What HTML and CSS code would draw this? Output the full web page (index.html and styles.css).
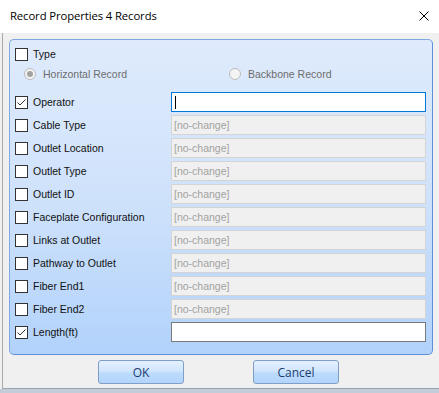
FILE: index.html
```html
<!DOCTYPE html>
<html>
<head>
<meta charset="utf-8">
<link rel="stylesheet" href="styles.css">
</head>
<body>
<div class="window">
  <div class="titlebar">
    <span class="title">Record Properties 4 Records</span>
    <svg class="close" width="10" height="10" viewBox="0 0 10 10"><path d="M0.5 0.5 L9.5 9.5 M9.5 0.5 L0.5 9.5" stroke="#000" stroke-width="1" fill="none"/></svg>
  </div>
  <div class="client">
    <div class="panel">
      <div class="row type-row">
        <span class="cb"></span><span class="label">Type</span>
      </div>
      <div class="radio-row">
        <div class="radio-item r1"><span class="radio on"></span><span class="rlabel">Horizontal Record</span></div>
        <div class="radio-item r2"><span class="radio"></span><span class="rlabel">Backbone Record</span></div>
      </div>
      <div class="rows">
        <div class="row"><span class="cb checked"><svg width="11" height="11" viewBox="0 0 11 11"><path d="M1.5 5.5 L4 8 L9.5 2.5" stroke="#333" stroke-width="1" fill="none"/></svg></span><span class="label">Operator</span><div class="field focus"><span class="caret"></span></div></div>
        <div class="row"><span class="cb"></span><span class="label">Cable Type</span><div class="field dis">[no-change]</div></div>
        <div class="row"><span class="cb"></span><span class="label">Outlet Location</span><div class="field dis">[no-change]</div></div>
        <div class="row"><span class="cb"></span><span class="label">Outlet Type</span><div class="field dis">[no-change]</div></div>
        <div class="row"><span class="cb"></span><span class="label">Outlet ID</span><div class="field dis">[no-change]</div></div>
        <div class="row"><span class="cb"></span><span class="label">Faceplate Configuration</span><div class="field dis">[no-change]</div></div>
        <div class="row"><span class="cb"></span><span class="label">Links at Outlet</span><div class="field dis">[no-change]</div></div>
        <div class="row"><span class="cb"></span><span class="label">Pathway to Outlet</span><div class="field dis">[no-change]</div></div>
        <div class="row"><span class="cb"></span><span class="label">Fiber End1</span><div class="field dis">[no-change]</div></div>
        <div class="row"><span class="cb"></span><span class="label">Fiber End2</span><div class="field dis">[no-change]</div></div>
        <div class="row"><span class="cb checked"><svg width="11" height="11" viewBox="0 0 11 11"><path d="M1.5 5.5 L4 8 L9.5 2.5" stroke="#333" stroke-width="1" fill="none"/></svg></span><span class="label">Length(ft)</span><div class="field normal"></div></div>
      </div>
    </div>
    <div class="buttons">
      <button class="btn ok">OK</button>
      <button class="btn cancel">Cancel</button>
    </div>
  </div>
</div>
</body>
</html>
```
FILE: styles.css
```css
html, body {
  margin: 0;
  padding: 0;
}
body {
  width: 439px;
  height: 393px;
  overflow: hidden;
  background: #c3cdd9;
  font-family: "Liberation Sans", Arial, sans-serif;
}
.window {
  width: 439px;
  height: 389px;
  background: #f0f0f0;
  display: flex;
  flex-direction: column;
}
.titlebar {
  height: 33px;
  background: #ffffff;
  display: flex;
  align-items: center;
  padding-left: 10px;
  padding-right: 10px;
  box-sizing: border-box;
  flex: none;
}
.title {
  font-family: "Open Sans", "Noto Sans", sans-serif;
  font-size: 11.3px;
  color: #000;
  flex: 1;
  letter-spacing: -0.1px;
  margin-top: -2px;
}
.close {
  margin-top: -1px;
}
.client {
  flex: 1;
  margin-left: 2px;
  border-left: 1px solid #a8a8a8;
  border-bottom: 1px solid #9aa4b0;
  display: flex;
  flex-direction: column;
  padding-top: 6px;
  padding-left: 6px;
}
.panel {
  width: 424px;
  height: 316px;
  box-sizing: border-box;
  border: 1px solid #7fa7e0;
  border-right-color: #5e90d8;
  border-bottom-color: #5e90d8;
  border-radius: 5px;
  background: linear-gradient(to bottom, #dfebfc 0%, #cfe2fb 50%, #b2d2fb 100%);
  padding: 4px 0 0 5px;
}
.row {
  display: flex;
  align-items: center;
  height: 20px;
}
.cb {
  width: 13px;
  height: 13px;
  box-sizing: border-box;
  border: 1px solid #333;
  background: #fff;
  flex: none;
  display: flex;
  align-items: center;
  justify-content: center;
}
.label {
  font-size: 10.5px;
  color: #111;
  margin-left: 5px;
  width: 138px;
  white-space: nowrap;
}
.radio-row {
  display: flex;
  height: 20px;
  align-items: center;
}
.radio-item {
  display: flex;
  align-items: center;
}
.r1 {
  margin-left: 9px;
  width: 205px;
}
.radio {
  width: 12px;
  height: 12px;
  box-sizing: border-box;
  border-radius: 50%;
  border: 1px solid #bcbcbc;
  background: #f4f4f4;
  position: relative;
  flex: none;
}
.radio.on::after {
  content: "";
  position: absolute;
  left: 2px;
  top: 2px;
  width: 6px;
  height: 6px;
  border-radius: 50%;
  background: #a3a3a3;
}
.rlabel {
  font-size: 10.5px;
  color: #6d6d6d;
  margin-left: 7px;
}
.rows {
  margin-top: 8px;
  display: flex;
  flex-direction: column;
  gap: 3px;
}
.field {
  width: 255px;
  height: 20px;
  box-sizing: border-box;
  font-size: 10.5px;
  line-height: 18px;
  padding-left: 2px;
  flex: none;
}
.field.dis {
  background: #f0f0f0;
  border: 1px solid #d4d4d4;
  color: #a2a2a2;
}
.field.focus {
  background: #fff;
  border: 1px solid #0078d7;
  display: flex;
  align-items: center;
}
.caret {
  width: 1px;
  height: 13px;
  background: #000;
  margin-left: 1px;
}
.field.normal {
  background: #fff;
  border: 1px solid #7a7a7a;
}
.buttons {
  display: flex;
  margin-top: 5px;
  padding-left: 89px;
  gap: 69px;
}
.btn {
  width: 86px;
  height: 24px;
  box-sizing: border-box;
  border: 1px solid #7f9fc9;
  border-radius: 3px;
  background: linear-gradient(to bottom, #e3f0fe 0%, #d1e6fd 45%, #bcdbfd 55%, #b3d4fb 100%);
  font-family: "Open Sans", "Noto Sans", sans-serif;
  font-size: 12px;
  color: #1d3b6e;
  padding: 0;
  margin: 0;
}
```
